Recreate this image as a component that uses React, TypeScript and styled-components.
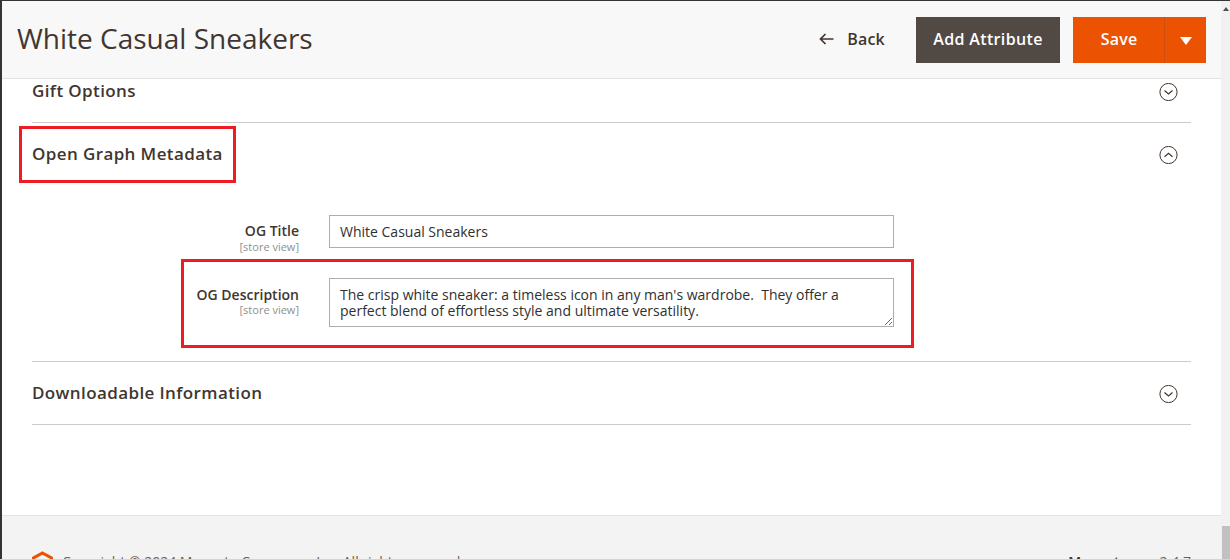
import React from "react";
import styled, { createGlobalStyle } from "styled-components";

const Global = createGlobalStyle`
  html, body { margin: 0; padding: 0; height: 100%; overflow: hidden; background: #fff; }
  * { box-sizing: border-box; }
  #root { height: 559px; }
`;

const Page = styled.div`
  position: relative;
  display: flex;
  width: 1230px;
  height: 559px;
  overflow: hidden;
  background: #fff;
  border-left: 2px solid #373330;
  border-top: 1px solid #373330;
  font-family: "Open Sans", "Noto Sans", sans-serif;
  color: #41362f;
`;

const Main = styled.div`
  flex: 1;
  min-width: 0;
  display: flex;
  flex-direction: column;
`;

const Header = styled.header`
  flex: none;
  height: 78px;
  display: flex;
  align-items: center;
  padding: 0 15px;
  background: #f8f8f8;
  border-bottom: 1px solid #e3e3e3;
`;

const Title = styled.h1`
  flex: 1;
  margin: 0 0 4px;
  font-size: 28px;
  font-weight: 400;
  line-height: 36px;
  color: #41362f;
`;

const BackButton = styled.button`
  display: flex;
  align-items: center;
  gap: 13px;
  margin-right: 31px;
  padding: 0 0 2px;
  border: 0;
  background: none;
  font: 600 16px "Open Sans", sans-serif;
  letter-spacing: 0.2px;
  color: #41362f;
`;

const SecondaryButton = styled.button`
  width: 144px;
  height: 46px;
  margin-right: 13px;
  padding: 0 0 2px;
  border: 0;
  background: #514943;
  color: #fff;
  font: 600 16px "Open Sans", sans-serif;
  letter-spacing: 0.36px;
`;

const SplitButton = styled.div`
  display: flex;
  width: 133px;
  height: 46px;
  background: #eb5202;
  color: #fff;
`;

const SaveLabel = styled.button`
  width: 91px;
  padding: 0 0 2px 1px;
  border: 0;
  background: none;
  color: #fff;
  font: 600 16px "Open Sans", sans-serif;
  letter-spacing: 0.2px;
`;

const SplitToggle = styled.button`
  flex: 1;
  display: flex;
  align-items: center;
  justify-content: center;
  border: 0;
  border-left: 1px solid #c9500f;
  background: none;
  padding: 3px 0 0;
`;

const Content = styled.main`
  flex: 1;
  min-height: 0;
  padding: 0 30px;
`;

const Section = styled.section<{ $pad?: number }>`
  border-bottom: 1px solid #cccccc;
  padding-bottom: ${(p) => p.$pad ?? 0}px;
`;

const SectionHead = styled.div<{ $height: number; $shift?: number }>`
  display: flex;
  align-items: center;
  justify-content: space-between;
  height: ${(p) => p.$height}px;
  padding-right: 13px;
  padding-top: ${(p) => p.$shift ?? 0}px;
`;

const SectionTitle = styled.strong`
  margin-bottom: 4px;
  font-size: 17px;
  font-weight: 600;
  letter-spacing: 0.39px;
  color: #41362f;
`;

const Field = styled.div<{ $top: number; $labelTop: number }>`
  display: grid;
  grid-template-columns: 267px 565px;
  column-gap: 30px;
  align-items: start;
  margin-top: ${(p) => p.$top}px;
  & > div:first-child { padding-top: ${(p) => p.$labelTop}px; }
`;

const Label = styled.div`
  display: flex;
  flex-direction: column;
  align-items: flex-end;
  height: 33px;
`;

const LabelText = styled.span`
  font-size: 14px;
  font-weight: 600;
  line-height: 19px;
  color: #41362f;
`;

const Scope = styled.span<{ $gap?: number }>`
  margin-top: ${(p) => p.$gap ?? 0}px;
  font-size: 11px;
  line-height: 14px;
  color: #8f8f8f;
`;

const TextInput = styled.input`
  width: 565px;
  height: 33px;
  padding: 0 10px;
  border: 1px solid #adadad;
  border-radius: 0;
  outline: none;
  font: 400 14px "Open Sans", sans-serif;
  color: #303030;
  background: #fff;
`;

const TextArea = styled.textarea`
  display: block;
  width: 565px;
  height: 49px;
  padding: 8px 10px 0;
  border: 1px solid #adadad;
  border-radius: 0;
  outline: none;
  resize: vertical;
  font: 400 14px/16px "Open Sans", sans-serif;
  color: #303030;
  background: #fff;
  overflow: hidden;
`;

const Footer = styled.footer`
  flex: none;
  height: 44px;
  display: flex;
  justify-content: space-between;
  padding: 35px 30px 0;
  background: #f3f3f3;
  border-top: 1px solid #e3e3e3;
  font-size: 14px;
  line-height: 22px;
  color: #676056;
`;

const Copyright = styled.div`
  display: flex;
  gap: 9px;
`;

const Version = styled.div`
  & > b { font-weight: 600; color: #41362f; }
`;

const Scrollbar = styled.aside`
  flex: none;
  width: 9px;
  display: flex;
  flex-direction: column;
  align-items: center;
  justify-content: space-between;
  background: #f1f1f1;
  padding-top: 6px;
`;

const ScrollArrow = styled.span`
  width: 0;
  height: 0;
  border-left: 3.5px solid transparent;
  border-right: 3.5px solid transparent;
  border-bottom: 4px solid #505050;
`;

const ScrollThumb = styled.span`
  width: 8px;
  height: 33px;
  margin-left: 1px;
  background: #c1c1c1;
`;

const Callout = styled.div<{ $x: number; $y: number; $w: number; $h: number }>`
  position: absolute;
  left: ${(p) => p.$x}px;
  top: ${(p) => p.$y}px;
  width: ${(p) => p.$w}px;
  height: ${(p) => p.$h}px;
  border: 3px solid #ed1c24;
  pointer-events: none;
`;

const Chevron = ({ up }: { up?: boolean }) => (
  <svg width="19" height="18" viewBox="0 0 19 18" fill="none" stroke="#41362f" strokeWidth="1">
    <circle cx="9.5" cy="9" r="8.6" />
    <path d={up ? "M5.5 10.8 L9.5 7.3 L13.5 10.8" : "M5.5 7.5 L9.5 11 L13.5 7.5"} strokeWidth="1.2" />
  </svg>
);

const BackArrow = () => (
  <svg width="15" height="12" viewBox="0 0 15 12" fill="none" stroke="#41362f" strokeWidth="1.7">
    <path d="M14.5 6 H1.5 M6.5 1 L1.5 6 L6.5 11" />
  </svg>
);

const CaretDown = () => (
  <svg width="12" height="8" viewBox="0 0 12 8" fill="#fff">
    <path d="M0 0 H12 L6 8 Z" />
  </svg>
);

const Logo = () => (
  <svg width="21" height="24" viewBox="0 0 21 24" fill="none" stroke="#eb5202" strokeWidth="3">
    <path d="M10.5 2 L19.5 7 V18 L10.5 23 L1.5 18 V7 Z" />
    <path d="M10.5 9 V19" strokeWidth="2" />
  </svg>
);

export default function App() {
  return (
    <Page>
      <Global />
      <Main>
        <Header>
          <Title>White Casual Sneakers</Title>
          <BackButton>
            <BackArrow />
            Back
          </BackButton>
          <SecondaryButton>Add Attribute</SecondaryButton>
          <SplitButton>
            <SaveLabel>Save</SaveLabel>
            <SplitToggle>
              <CaretDown />
            </SplitToggle>
          </SplitButton>
        </Header>
        <Content>
          <Section $pad={17}>
            <SectionHead $height={26}>
              <SectionTitle>Gift Options</SectionTitle>
              <Chevron />
            </SectionHead>
          </Section>
          <Section $pad={34}>
            <SectionHead $height={62} $shift={2}>
              <SectionTitle>Open Graph Metadata</SectionTitle>
              <Chevron up />
            </SectionHead>
            <Field $top={30} $labelTop={6}>
              <Label>
                <LabelText>OG Title</LabelText>
                <Scope>[store view]</Scope>
              </Label>
              <TextInput readOnly value="White Casual Sneakers" />
            </Field>
            <Field $top={30} $labelTop={7}>
              <Label>
                <LabelText>OG Description</LabelText>
                <Scope $gap={-1}>[store view]</Scope>
              </Label>
              <TextArea
                readOnly
                value={"The crisp white sneaker: a timeless icon in any man's wardrobe.  They offer a perfect blend of effortless style and ultimate versatility."}
              />
            </Field>
          </Section>
          <Section>
            <SectionHead $height={62} $shift={2}>
              <SectionTitle>Downloadable Information</SectionTitle>
              <Chevron />
            </SectionHead>
          </Section>
        </Content>
        <Footer>
          <Copyright>
            <Logo />
            <span>Copyright © 2024 Magento Commerce Inc. All rights reserved.</span>
          </Copyright>
          <Version>
            <b>Magento</b> ver. 2.4.7
          </Version>
        </Footer>
      </Main>
      <Scrollbar>
        <ScrollArrow />
        <ScrollThumb />
      </Scrollbar>
      <Callout $x={17} $y={125} $w={217} $h={57} />
      <Callout $x={179} $y={258} $w={733} $h={89} />
    </Page>
  );
}
